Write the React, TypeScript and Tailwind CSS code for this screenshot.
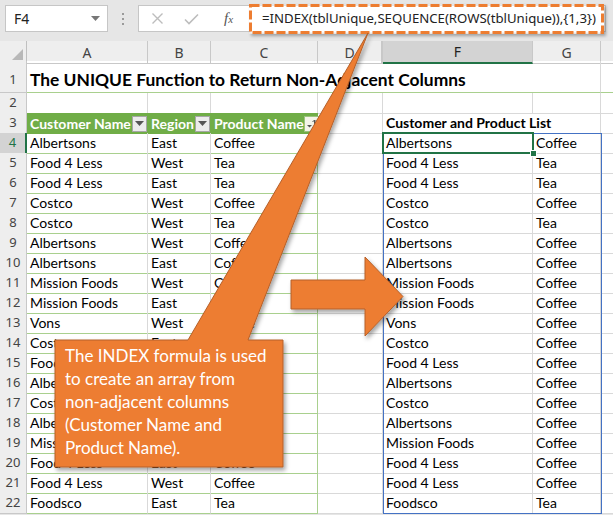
import React from "react";

const COLS = "grid grid-cols-[27px_121px_63px_107px_65px_150px_68px_12px]";

const left: [string, string, string][] = [
  ["Albertsons", "East", "Coffee"],
  ["Food 4 Less", "West", "Tea"],
  ["Food 4 Less", "East", "Tea"],
  ["Costco", "West", "Coffee"],
  ["Costco", "West", "Tea"],
  ["Albertsons", "West", "Coffee"],
  ["Albertsons", "East", "Coffee"],
  ["Mission Foods", "West", "Coffee"],
  ["Mission Foods", "East", "Coffee"],
  ["Vons", "West", "Coffee"],
  ["Costco", "East", "Coffee"],
  ["Food 4 Less", "West", "Coffee"],
  ["Albertsons", "East", "Coffee"],
  ["Costco", "West", "Coffee"],
  ["Albertsons", "East", "Coffee"],
  ["Mission Foods", "West", "Coffee"],
  ["Food 4 Less", "East", "Coffee"],
  ["Food 4 Less", "West", "Coffee"],
  ["Foodsco", "East", "Tea"],
];

const cellText = "font-['Lato',sans-serif] text-[14px] leading-[20px] text-black whitespace-nowrap pl-[3px]";
const rowHead = "flex items-center justify-center bg-[#eeeeee] border-r border-b border-[#c8c8c8] font-['Noto_Sans',sans-serif] text-[13px] text-[#444]";
const plain = "border-r border-b border-[#d9d9d9]";

function FilterBtn({ sort }: { sort?: boolean }) {
  return (
    <div className={"ml-auto mr-[1px] w-[15px] h-[16px] flex items-center justify-center border " + (sort ? "bg-[#f4f4e8] border-[#9cc27f]" : "bg-[#ececec] border-[#a6a6a6]")}>
      {sort ? (
        <svg width="13" height="13" viewBox="0 0 13 13">
          <polygon points="2,8 7,8 4.5,10.5" fill="#555" />
          <line x1="9.5" y1="3" x2="9.5" y2="11" stroke="#555" strokeWidth="1" />
          <polyline points="7.5,5 9.5,3 11.5,5" fill="none" stroke="#555" strokeWidth="1" />
        </svg>
      ) : (
        <svg width="9" height="5" viewBox="0 0 9 5">
          <polygon points="0,0 9,0 4.5,5" fill="#555" />
        </svg>
      )}
    </div>
  );
}

export default function App() {
  return (
    <div className="relative w-[613px] h-[515px] overflow-hidden bg-[#e6e6e6]">
      {/* Formula bar */}
      <div className="h-[41px] bg-[#e6e6e6] flex items-start pt-[5px] pl-[5px]">
        <div className="w-[103px] h-[27px] bg-white border border-[#c6c6c6] flex items-center justify-between pl-[8px] pr-[7px]">
          <span className="font-['Noto_Sans',sans-serif] text-[14px] text-[#222]">F4</span>
          <svg width="9" height="5" viewBox="0 0 9 5">
            <polygon points="0,0 9,0 4.5,5" fill="#777" />
          </svg>
        </div>
        <div className="w-[30px] h-[27px] flex flex-col items-center justify-center gap-[3px]">
          <div className="w-[2px] h-[2px] bg-[#9a9a9a]" />
          <div className="w-[2px] h-[2px] bg-[#9a9a9a]" />
          <div className="w-[2px] h-[2px] bg-[#9a9a9a]" />
        </div>
        <div className="w-[468px] h-[27px] bg-white border border-[#c6c6c6] flex items-center">
          <div className="w-[110px] flex items-center">
            <svg className="ml-[12px]" width="13" height="13" viewBox="0 0 13 13">
              <path d="M1.5 1.5 L11.5 11.5 M11.5 1.5 L1.5 11.5" stroke="#bdbdbd" strokeWidth="1.4" />
            </svg>
            <svg className="ml-[20px]" width="15" height="12" viewBox="0 0 15 12">
              <path d="M1 6.5 L5 10.5 L14 1.5" fill="none" stroke="#bdbdbd" strokeWidth="1.6" />
            </svg>
            <span className="ml-[25px] font-['Liberation_Serif',serif] italic text-[15px] text-[#555] leading-none">
              f<span className="text-[11px]">x</span>
            </span>
          </div>
          <div className="relative w-[355px] h-[30px] shrink-0 flex items-center shadow-[2px_2px_3px_rgba(0,0,0,0.3)]">
            <svg className="absolute inset-0" width="355" height="30" viewBox="0 0 355 30">
              <rect x="1.5" y="1.5" width="352" height="27" fill="white" stroke="#ed7d31" strokeWidth="3" strokeDasharray="9 3" />
            </svg>
            <span className="relative pl-[13px] font-['Noto_Sans',sans-serif] text-[13.2px] text-[#222] whitespace-nowrap">
              =INDEX(tblUnique,SEQUENCE(ROWS(tblUnique)),{"{"}1,3{"}"})
            </span>
          </div>
        </div>
      </div>

      {/* Column headers */}
      <div className={COLS + " h-[20px] bg-[#eeeeee] font-['Noto_Sans',sans-serif] text-[14px] text-[#444]"}>
        <div className="border-r border-b border-[#c0c0c0] flex items-end justify-end p-[3px]">
          <svg width="11" height="11" viewBox="0 0 11 11">
            <polygon points="11,0 11,11 0,11" fill="#b8b8b8" />
          </svg>
        </div>
        <div className="border-r border-b border-[#c8c8c8] flex items-center justify-center">A</div>
        <div className="border-r border-b border-[#c8c8c8] flex items-center justify-center">B</div>
        <div className="border-r border-b border-[#c8c8c8] flex items-center justify-center">C</div>
        <div className="border-r-2 border-b border-[#c8c8c8] flex items-center justify-center">D</div>
        <div className="border-r border-[#c8c8c8] border-b-2 border-b-[#217346] bg-[#d3d3d3] flex items-center justify-center text-[#222]">F</div>
        <div className="border-r border-b border-[#c8c8c8] flex items-center justify-center">G</div>
        <div className="border-b border-[#c8c8c8]" />
      </div>

      {/* Row 1 */}
      <div className={COLS + " h-[32px] bg-white"}>
        <div className={rowHead + " items-end pb-[3px]"}>1</div>
        <div className="border-b border-[#a9d08e] flex items-end pb-[1px] overflow-visible">
          <span className="font-['Lato',sans-serif] font-bold text-[17.4px] leading-[22px] text-black whitespace-nowrap pl-[3px]">
            The UNIQUE Function to Return Non-Adjacent Columns
          </span>
        </div>
        <div className="border-b border-[#a9d08e]" />
        <div className="border-b border-[#a9d08e]" />
        <div className="border-b border-[#a9d08e]" />
        <div className="border-b border-[#a9d08e]" />
        <div className="border-b border-r border-b-[#a9d08e] border-r-[#d9d9d9]" />
        <div className="border-b border-[#a9d08e]" />
      </div>

      {/* Row 2 */}
      <div className={COLS + " h-[20px] bg-white"}>
        <div className={rowHead}>2</div>
        <div className={plain} />
        <div className={plain} />
        <div className={plain} />
        <div className={plain} />
        <div className={plain} />
        <div className={plain} />
        <div className="border-b border-[#d9d9d9]" />
      </div>

      {/* Row 3 */}
      <div className={COLS + " h-[20px] bg-white"}>
        <div className={rowHead}>3</div>
        <div className="bg-[#70ad47] flex items-center">
          <span className="font-['Lato',sans-serif] font-bold text-[14px] leading-[20px] text-white whitespace-nowrap pl-[3px]">Customer Name</span>
          <FilterBtn />
        </div>
        <div className="bg-[#70ad47] flex items-center">
          <span className="font-['Lato',sans-serif] font-bold text-[14px] leading-[20px] text-white whitespace-nowrap pl-[3px]">Region</span>
          <FilterBtn />
        </div>
        <div className="bg-[#70ad47] flex items-center">
          <span className="font-['Lato',sans-serif] font-bold text-[14px] leading-[20px] text-white whitespace-nowrap pl-[3px]">Product Name</span>
          <FilterBtn sort />
        </div>
        <div className={plain} />
        <div className="border-b border-[#d9d9d9] flex items-center">
          <span className="font-['Lato',sans-serif] font-bold text-[14px] leading-[20px] text-black whitespace-nowrap pl-[3px]">Customer and Product List</span>
        </div>
        <div className={plain} />
        <div className="border-b border-[#d9d9d9]" />
      </div>

      {/* Data rows */}
      {left.map((r, i) => {
        const n = i + 4;
        const active = n === 4;
        return (
          <div key={n} className={COLS + " h-[20px] bg-white"}>
            {active ? (
              <div className="flex items-center justify-center bg-[#d3d3d3] border-r-2 border-r-[#217346] border-b border-b-[#c8c8c8] font-['Noto_Sans',sans-serif] text-[13px] text-[#217346]">
                {n}
              </div>
            ) : (
              <div className={rowHead}>{n}</div>
            )}
            <div className={"border-r border-b border-r-[#d9d9d9] border-b-[#a9d08e] " + cellText}>{r[0]}</div>
            <div className={"border-r border-b border-r-[#d9d9d9] border-b-[#a9d08e] " + cellText}>{r[1]}</div>
            <div className={"border-r border-b border-[#a9d08e] " + cellText}>{r[2]}</div>
            <div className={plain} />
            <div className={plain + " " + cellText}>{r[0]}</div>
            <div className={plain + " " + cellText}>{r[2]}</div>
            <div className="border-b border-[#d9d9d9]" />
          </div>
        );
      })}

      {/* Spill range border */}
      <div className="absolute left-[383px] top-[133px] w-[219px] h-[381px] border border-[#4472c4] pointer-events-none" />
      {/* Active cell */}
      <div className="absolute left-[382px] top-[132px] w-[152px] h-[22px] border-2 border-[#217346] pointer-events-none" />
      <div className="absolute left-[530px] top-[150px] w-[7px] h-[7px] bg-[#217346] border border-white" />

      {/* Callout & arrow */}
      <svg className="absolute left-0 top-0 pointer-events-none" width="613" height="515" viewBox="0 0 613 515">
        <defs>
          <filter id="sh" x="-20%" y="-20%" width="140%" height="140%">
            <feDropShadow dx="2" dy="3" stdDeviation="2" floodColor="#000" floodOpacity="0.35" />
          </filter>
        </defs>
        <path
          d="M55 340 H188 L368 33 L248 340 H283 V467 H55 Z"
          fill="#ed7d31"
          stroke="#b5602a"
          strokeWidth="1"
          filter="url(#sh)"
        />
        <path
          d="M291 280 H365 V257 L403 296.5 L365 336 V309 H291 Z"
          fill="#ed7d31"
          stroke="#b5602a"
          strokeWidth="1"
          filter="url(#sh)"
        />
      </svg>
      <div className="absolute left-[65px] top-[344px] w-[215px] font-['Lato',sans-serif] text-[17px] leading-[23px] text-white">
        <div className="whitespace-nowrap">The INDEX formula is used</div>
        <div className="whitespace-nowrap">to create an array from</div>
        <div className="whitespace-nowrap">non-adjacent columns</div>
        <div className="whitespace-nowrap">(Customer Name and</div>
        <div className="whitespace-nowrap">Product Name).</div>
      </div>
    </div>
  );
}
